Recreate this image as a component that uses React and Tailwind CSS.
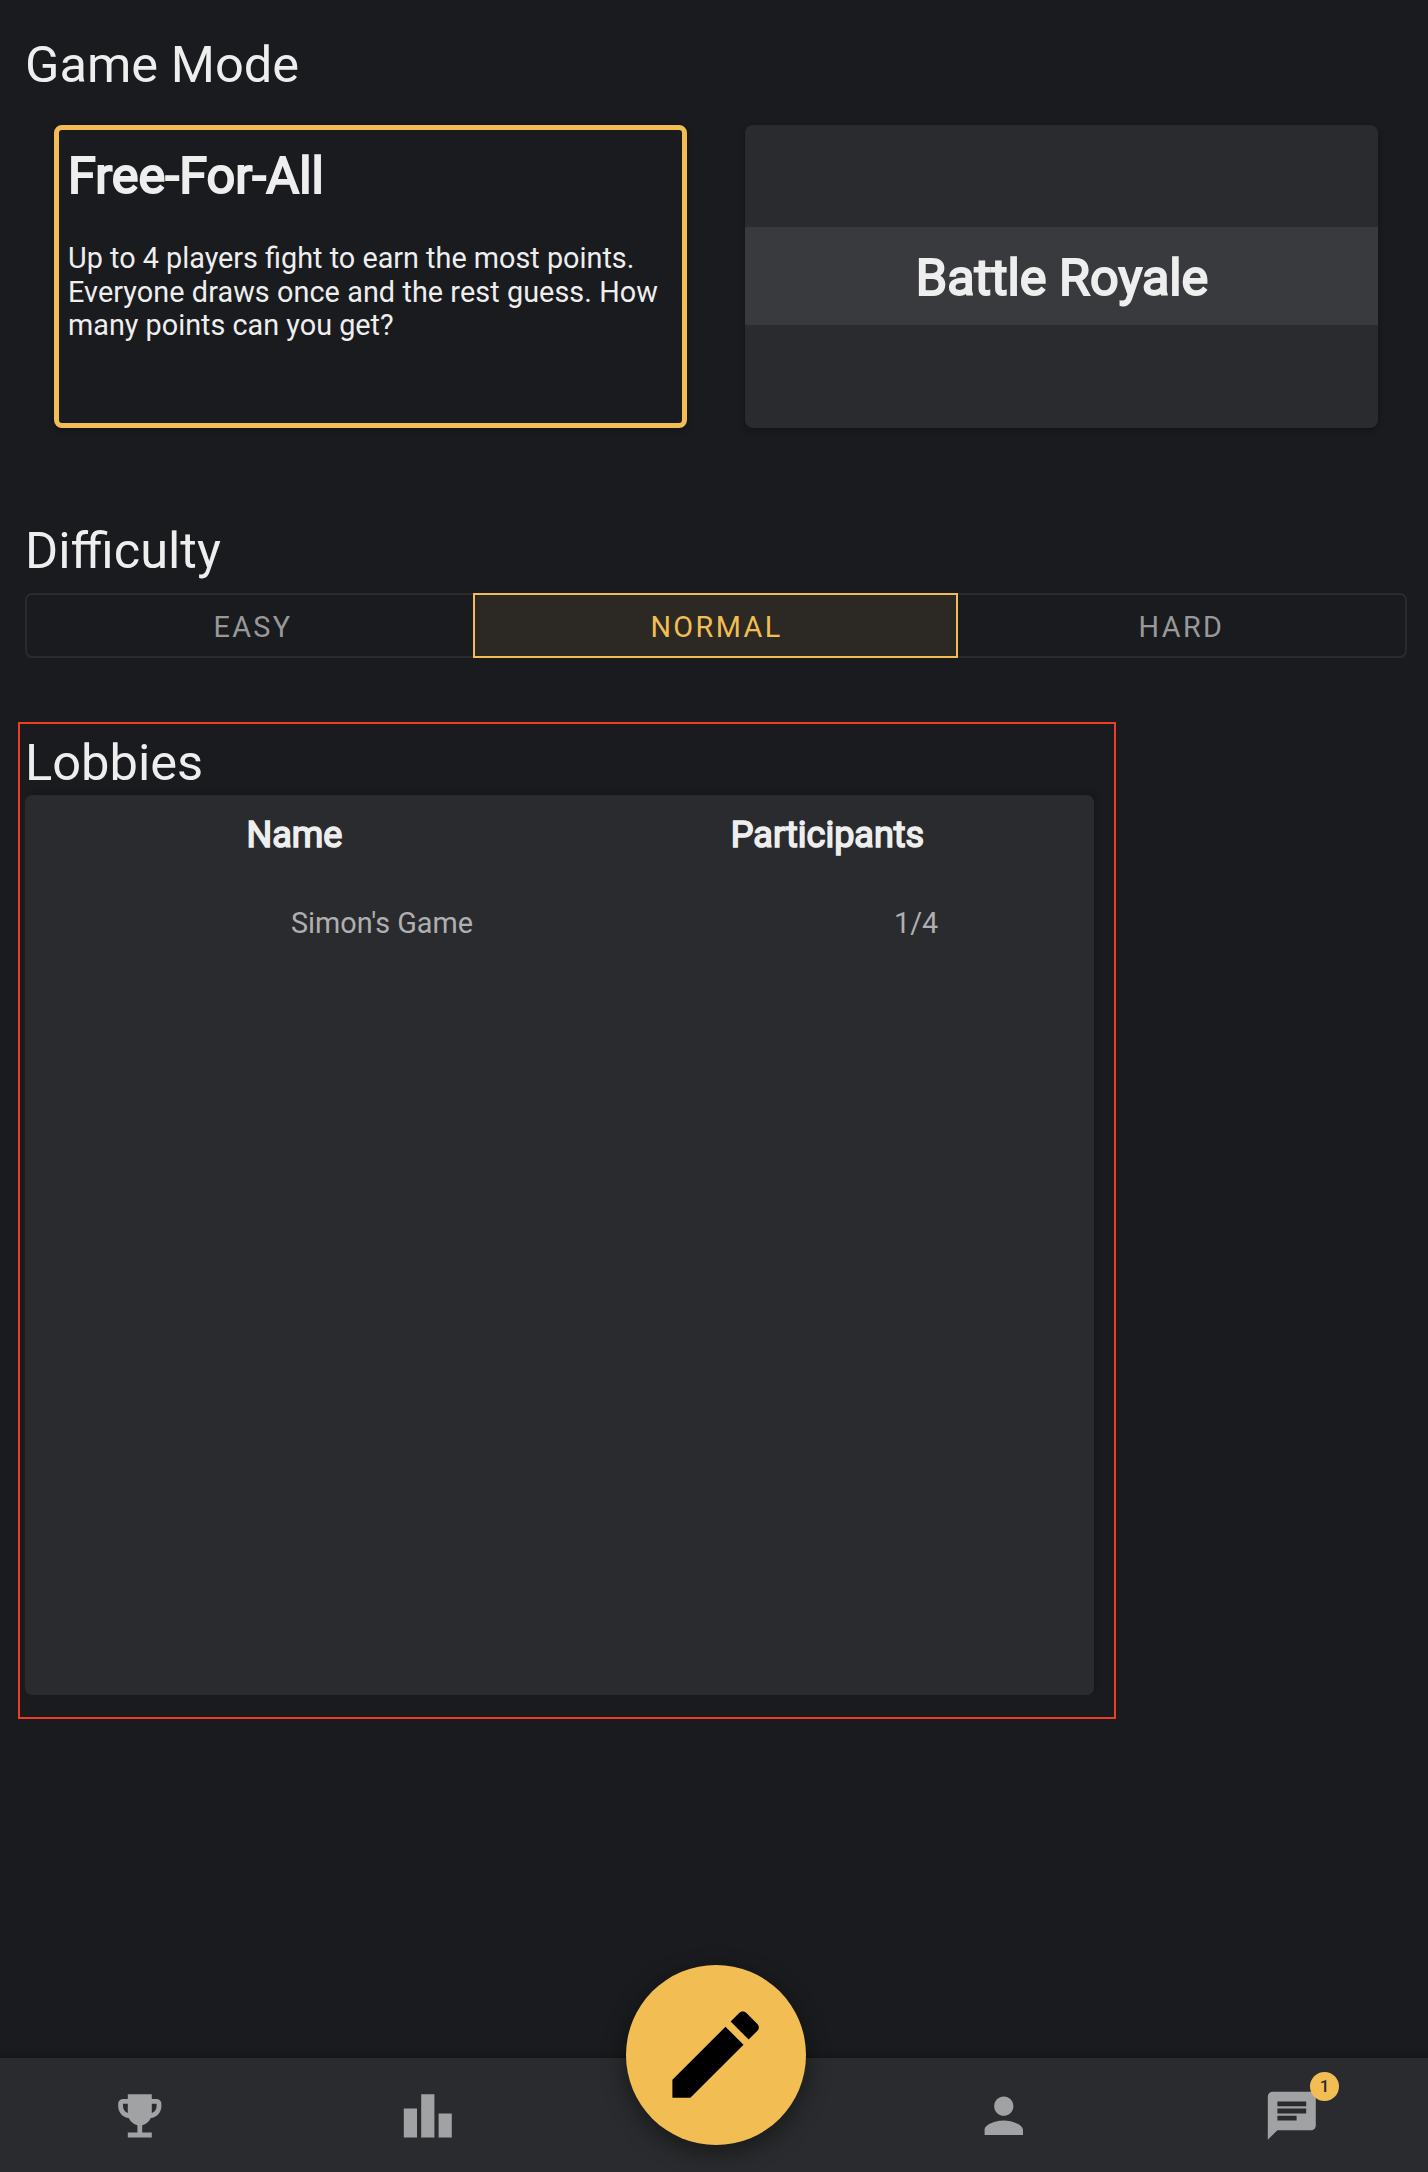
import React from "react";

function Icon({ d, className }) {
  return (
    <svg viewBox="0 0 24 24" fill="currentColor" className={className} aria-hidden="true">
      <path d={d} />
    </svg>
  );
}

const ICONS = {
  trophy:
    "M19 5h-2V3H7v2H5c-1.1 0-2 .9-2 2v1c0 2.55 1.92 4.63 4.39 4.94.63 1.5 1.98 2.63 3.61 2.96V19H7v2h10v-2h-4v-3.1c1.63-.33 2.98-1.46 3.61-2.96C19.08 12.63 21 10.55 21 8V7c0-1.1-.9-2-2-2zM5 8V7h2v3.82C5.84 10.4 5 9.3 5 8zm14 0c0 1.3-.84 2.4-2 2.82V7h2v1z",
  leaderboard: "M7.5 21H2V9h5.5v12zm7.25-18h-5.5v18h5.5V3zM22 11h-5.5v10H22V11z",
  person:
    "M12 12c2.21 0 4-1.79 4-4s-1.79-4-4-4-4 1.79-4 4 1.79 4 4 4zm0 2c-2.67 0-8 1.34-8 4v2h16v-2c0-2.66-5.33-4-8-4z",
  chat:
    "M20 2H4c-1.1 0-1.99.9-1.99 2L2 22l4-4h14c1.1 0 2-.9 2-2V4c0-1.1-.9-2-2-2zM6 9h12v2H6V9zm8 5H6v-2h8v2zm4-6H6V6h12v2z",
  pencil:
    "M3 17.25V21h3.75L17.81 9.94l-3.75-3.75L3 17.25zM20.71 7.04c.39-.39.39-1.02 0-1.41l-2.34-2.34c-.39-.39-1.02-.39-1.41 0l-1.83 1.83 3.75 3.75 1.83-1.83z",
};

function Heading({ children }) {
  return <h2 className="pl-[25px] text-[50.6px] leading-[60px]">{children}</h2>;
}

function NavButton({ label, children }) {
  return (
    <button aria-label={label} className="flex items-center justify-center">
      {children}
    </button>
  );
}

export default function App() {
  return (
    <div className="flex h-[2172px] w-[1428px] flex-col overflow-hidden bg-[#1a1b1e] font-['Roboto',sans-serif] text-[#eeeeee]">
      <section className="h-[486px] pt-[35px]">
        <Heading>Game Mode</Heading>
        <div className="mt-[30px] flex gap-[58px] pl-[54px]">
          <button className="flex h-[303px] w-[633px] flex-col rounded-[8px] border-[5px] border-[#f2be54] pt-[16px] pl-[9px] text-left shadow-[0_2px_6px_rgba(0,0,0,0.3)]">
            <span className="text-[50.4px] leading-[60px] [-webkit-text-stroke:2px_#eeeeee]">Free-For-All</span>
            <span className="mt-[36px] flex flex-col text-[28.8px] leading-[33.7px]">
              <span>Up to 4 players fight to earn the most points.</span>
              <span className="tracking-[0.07px]">Everyone draws once and the rest guess. How</span>
              <span>many points can you get?</span>
            </span>
          </button>
          <button className="flex h-[303px] w-[633px] items-start rounded-[8px] bg-[#2a2b2e] pt-[102px] shadow-[0_2px_6px_rgba(0,0,0,0.3)]">
            <span className="h-[98px] w-full bg-[#393a3d] pl-px text-[50.4px] leading-[102px] [-webkit-text-stroke:2px_#eeeeee]">
              Battle Royale
            </span>
          </button>
        </div>
      </section>

      <section className="h-[236px] pt-[35px]">
        <Heading>Difficulty</Heading>
        <div className="mt-[12px] mr-[21px] ml-[25px] flex h-[65px] text-[28.8px] leading-[61px] tracking-[2.4px] text-[#98989a]">
          <button className="w-[448px] rounded-l-[7px] border-2 border-r-0 border-[#2b2b2d] pt-[2px] pl-[6px]">EASY</button>
          <button className="w-[485px] border-2 border-[#f2be54] bg-[#2c2823] pt-[2px] pl-[2px] text-[#f2be54]">NORMAL</button>
          <button className="w-[449px] rounded-r-[7px] border-2 border-l-0 border-[#2b2b2d] pt-[2px]">HARD</button>
        </div>
      </section>

      <section className="ml-[18px] h-[997px] w-[1098px] border-2 border-[#ee3d23] pt-[9px]">
        <h2 className="pl-[5px] text-[50.6px] leading-[60px]">Lobbies</h2>
        <div className="mt-[2px] ml-[5px] h-[900px] w-[1069px] rounded-[7px] bg-[#2a2b2e] shadow-[4px_-4px_6px_-2px_rgba(0,0,0,0.2)]">
          <div className="grid grid-cols-2 pt-[18px] pl-[3px] text-center text-[36px] leading-[44px]">
            <span className="[-webkit-text-stroke:1.6px_#eeeeee]">Name</span>
            <span className="[-webkit-text-stroke:1.6px_#eeeeee]">Participants</span>
          </div>
          <div className="mt-[46px] flex text-[28.8px] leading-[40px] text-[#afafb0]">
            <span className="w-[603px] pl-[266px]">Simon's Game</span>
            <span className="pl-[266px]">1/4</span>
          </div>
        </div>
      </section>

      <nav className="mt-auto -ml-1 grid h-[114px] w-[1440px] grid-cols-5 bg-[#2a2b2e] pt-[2px] text-[#a1a2a3] shadow-[0_-2px_8px_rgba(0,0,0,0.25)]">
        <NavButton label="Trophies">
          <Icon d={ICONS.trophy} className="size-[57.6px]" />
        </NavButton>
        <NavButton label="Leaderboard">
          <Icon d={ICONS.leaderboard} className="size-[57.6px]" />
        </NavButton>
        <div className="flex justify-center">
          <button
            aria-label="Draw"
            className="-mt-[95px] flex size-[180px] items-center justify-center rounded-full bg-[#f2be54] text-black shadow-[0_7px_24px_rgba(0,0,0,0.45)]"
          >
            <Icon d={ICONS.pencil} className="size-[115.2px]" />
          </button>
        </div>
        <NavButton label="Profile">
          <Icon d={ICONS.person} className="size-[57.6px]" />
        </NavButton>
        <NavButton label="Chat">
          <span className="relative">
            <Icon d={ICONS.chat} className="size-[57.6px]" />
            <span className="absolute top-[-15px] left-[47px] size-[29px] rounded-full bg-[#f2be54] text-center text-[17px] leading-[29px] font-medium text-[#2a2b2e]">
              1
            </span>
          </span>
        </NavButton>
      </nav>
    </div>
  );
}
